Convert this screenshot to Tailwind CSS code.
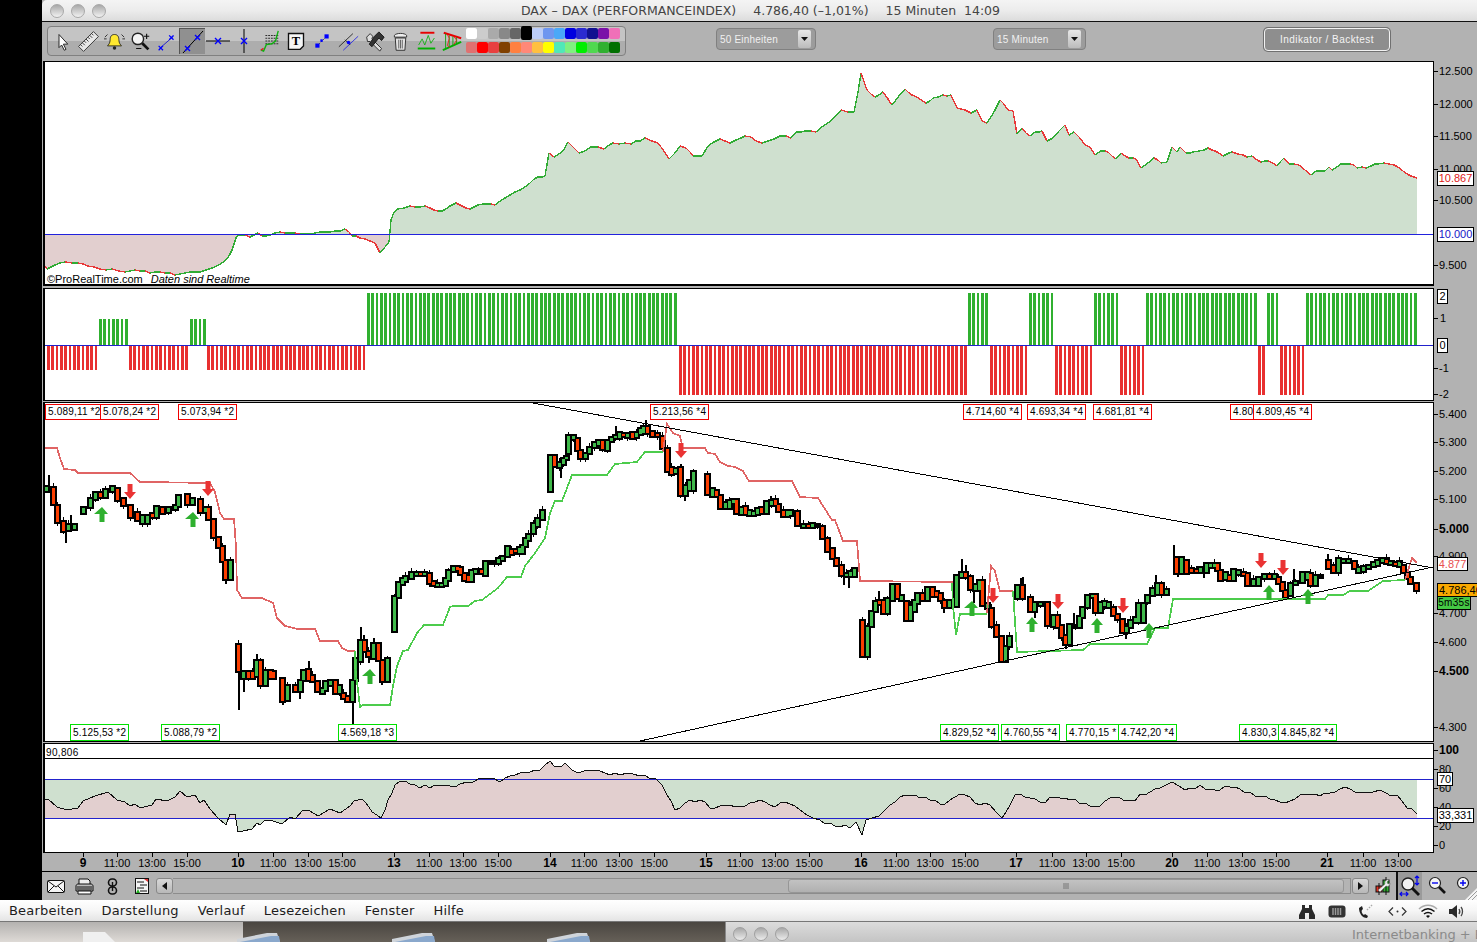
<!DOCTYPE html>
<html lang="de">
<head>
<meta charset="utf-8">
<title>DAX</title>
<script src="https://cdn.jsdelivr.net/npm/@tailwindcss/browser@4"></script>
</head>
<body class="bg-black">
<div class="w-[1477px] h-[942px] overflow-hidden flex flex-col bg-black font-['Liberation_Sans',sans-serif] text-black">

  <div class="flex h-[900px] shrink-0">
    <div class="w-[42px] shrink-0 bg-black"></div>
    <div class="flex-1 flex flex-col bg-[#b2b2b2] min-w-0">

      <!-- title bar -->
      <div class="relative h-[22px] shrink-0 rounded-tl-[5px] bg-gradient-to-b from-[#f4f4f4] via-[#ececec] to-[#dcdcdc] border-b border-[#111] flex items-center justify-center gap-[17px] pt-[2px] pl-[2px] font-['DejaVu_Sans',sans-serif] text-[12.5px] text-[#444]">
        <div class="absolute left-[8px] top-[4px] flex gap-[7px]">
          <span class="w-[14px] h-[14px] rounded-full border border-[#a8a8a8] bg-gradient-to-b from-[#a8a8a8] to-[#f2f2f2]"></span>
          <span class="w-[14px] h-[14px] rounded-full border border-[#a8a8a8] bg-gradient-to-b from-[#a8a8a8] to-[#f2f2f2]"></span>
          <span class="w-[14px] h-[14px] rounded-full border border-[#a8a8a8] bg-gradient-to-b from-[#a8a8a8] to-[#f2f2f2]"></span>
        </div>
        <span>DAX – DAX (PERFORMANCEINDEX)</span><span>4.786,40 (–1,01%)</span><span>15 Minuten&nbsp;&nbsp;14:09</span>
      </div>

      <!-- toolbar -->
      <div class="relative h-[39px] shrink-0 flex items-start">
        <div class="ml-[5px] mt-[4px] w-[579px] h-[30px] rounded-[4px] border border-[#808080] bg-gradient-to-b from-[#c4c4c4] from-50% to-[#adadad] to-50% flex items-center pl-px">
          <button class="w-[26px] h-[26px] flex items-center justify-center"><svg width="21" height="21" viewBox="0 0 24 24"><path d="M8 4v15l3-3 3 6 2-1-3-6h5z" fill="#fff" stroke="#222" stroke-width="1.1"/></svg></button>
          <button class="w-[26px] h-[26px] flex items-center justify-center"><svg width="21" height="21" viewBox="0 0 24 24"><g transform="rotate(-45 12 12)"><rect x="0" y="8" width="24" height="8" fill="#e8e8e8" stroke="#333"/><path d="M3 8v3M6 8v4M9 8v3M12 8v4M15 8v3M18 8v4M21 8v3" stroke="#333" fill="none"/></g></svg></button>
          <button class="w-[26px] h-[26px] flex items-center justify-center"><svg width="21" height="21" viewBox="0 0 24 24"><path d="M12 4c-4 0-5 3-5 6 0 4-2 6-3 7h16c-1-1-3-3-3-7 0-3-1-6-5-6z" fill="#ffe830" stroke="#222"/><circle cx="12" cy="19.5" r="2" fill="#222"/><path d="M4 4 1 7M20 4l3 3M3 9H0M21 9h3" stroke="#222" fill="none"/></svg></button>
          <button class="w-[26px] h-[26px] flex items-center justify-center"><svg width="21" height="21" viewBox="0 0 24 24"><circle cx="9" cy="9" r="6.5" fill="#f4f4f4" stroke="#222" stroke-width="1.6"/><path d="m14 14 7 7" stroke="#111" stroke-width="3.2" fill="none"/><path d="M19 3v6M16 6h6M7 20h6" stroke="#111" stroke-width="1.3" fill="none"/></svg></button>
          <button class="w-[26px] h-[26px] flex items-center justify-center"><svg width="21" height="21" viewBox="0 0 24 24"><path d="M4 20 20 6" stroke="#1515c8" fill="none"/><path d="M3 17l5 5M8 17l-5 5M15 5l5 5M20 5l-5 5" stroke="#0000ff" stroke-width="1.4" fill="none"/></svg></button>
          <button class="w-[26px] h-[26px] bg-[#909090] border-l border-t border-[#555] flex items-center justify-center"><svg width="24" height="24" viewBox="0 0 24 24"><path d="M2 23 22 1" stroke="#000" fill="none"/><path d="M4 16l5 5M9 16l-5 5M14 5l5 5M19 5l-5 5" stroke="#0000ff" stroke-width="1.4" fill="none"/></svg></button>
          <button class="w-[26px] h-[26px] flex items-center justify-center"><svg width="24" height="24" viewBox="0 0 24 24"><path d="M0 12h24" stroke="#000" fill="none"/><path d="M9 9l6 6M15 9l-6 6" stroke="#0000ff" stroke-width="1.4" fill="none"/></svg></button>
          <button class="w-[26px] h-[26px] flex items-center justify-center"><svg width="24" height="24" viewBox="0 0 24 24"><path d="M12 0v24" stroke="#000" fill="none"/><path d="M9 9l6 6M15 9l-6 6" stroke="#0000ff" stroke-width="1.4" fill="none"/></svg></button>
          <button class="w-[26px] h-[26px] flex items-center justify-center"><svg width="22" height="22" viewBox="0 0 24 24"><path d="M7 6h14M7 9h14M7 12h14M7 15h14" stroke="#222" stroke-dasharray="2 1" fill="none"/><path d="M2 22l3 1 3-7 6-1 4-3 3-11" stroke="#10b010" stroke-width="1.5" fill="none"/><path d="M2 22l3-2" stroke="#e02020" stroke-width="1.5" fill="none"/></svg></button>
          <button class="w-[26px] h-[26px] flex items-center justify-center"><svg width="20" height="20" viewBox="0 0 24 24"><path d="M3 3h18v15l-4 4H3z" fill="#f6f6f6" stroke="#111" stroke-width="1.6"/><text x="12" y="17" text-anchor="middle" font-family="Liberation Serif" font-weight="700" font-size="15" fill="#000">T</text></svg></button>
          <button class="w-[26px] h-[26px] flex items-center justify-center"><svg width="20" height="20" viewBox="0 0 24 24"><path d="M5 19 19 5" stroke="#111" stroke-dasharray="2 2" fill="none"/><rect x="4" y="15" width="5" height="5" fill="#0000ff"/><rect x="15" y="4" width="5" height="5" fill="#0000ff"/><rect x="10" y="10" width="3" height="3" fill="#0000ff"/></svg></button>
          <button class="w-[26px] h-[26px] flex items-center justify-center"><svg width="21" height="21" viewBox="0 0 24 24"><path d="M1 18 17 3" stroke="#222" fill="none"/><path d="M6 22 23 6" stroke="#2a2ae0" fill="none"/><path d="M8 10l6 6" stroke="#222" fill="none"/><circle cx="12" cy="13" r="2" fill="#0000ff"/></svg></button>
          <button class="w-[26px] h-[26px] flex items-center justify-center"><svg width="21" height="21" viewBox="0 0 24 24"><path d="M3 7l4-4 3 3-1 3 11 11-2 3L7 12l-3 0z" fill="#ddd" stroke="#222"/><path d="M12 6l5-5 6 6-3 4-3-3-8 10-3-3z" fill="#333" stroke="#111"/></svg></button>
          <button class="w-[26px] h-[26px] flex items-center justify-center"><svg width="21" height="21" viewBox="0 0 24 24"><path d="M5 5c2-3 12-3 14 0v2H5z" fill="#eee" stroke="#222"/><path d="M6 8h12l-1 14H7z" fill="#e2e2e2" stroke="#222"/><path d="M10 10v10M12 10v10M14 10v10" stroke="#555" fill="none"/></svg></button>
          <button class="w-[26px] h-[26px] flex items-center justify-center"><svg width="21" height="21" viewBox="0 0 24 24"><path d="M5 2h16" stroke="#e80000" stroke-width="2.2" fill="none"/><path d="M2 20h20" stroke="#00b000" stroke-width="2.2" fill="none"/><path d="M3 16l4-7 3 7 4-11 3 9 4-6" stroke="#10b010" fill="none"/></svg></button>
          <button class="w-[26px] h-[26px] flex items-center justify-center"><svg width="22" height="22" viewBox="0 0 24 24"><path d="M3 3 22 9" stroke="#e80000" stroke-width="2.2" fill="none"/><path d="M2 22 22 13" stroke="#00b000" stroke-width="2.2" fill="none"/><path d="M5 4v17M9 6v13M13 7v10M17 8v7" stroke="#10a010" fill="none"/><path d="M7 5l2 4-2 8 3 2M14 7l3 4-3 5" stroke="#e82020" fill="none"/></svg></button>
          <div class="ml-px grid grid-cols-[repeat(14,11px)] grid-rows-2 gap-y-[2px]">
            <i class="h-[11px] rounded-[2px] bg-[#ffffff]"></i><i class="h-[11px] rounded-[2px] bg-[#cccccc]"></i><i class="h-[11px] rounded-[2px] bg-[#aaaaaa]"></i><i class="h-[11px] rounded-[2px] bg-[#888888]"></i><i class="h-[11px] rounded-[2px] bg-[#666666]"></i><i class="h-[14px] -mt-[2px] rounded-[2px] bg-[#000000]"></i><i class="h-[11px] rounded-[2px] bg-[#bccdf8]"></i><i class="h-[11px] rounded-[2px] bg-[#6e96f0]"></i><i class="h-[11px] rounded-[2px] bg-[#4aa8f8]"></i><i class="h-[11px] rounded-[2px] bg-[#0000e0]"></i><i class="h-[11px] rounded-[2px] bg-[#2a2ad0]"></i><i class="h-[11px] rounded-[2px] bg-[#101090]"></i><i class="h-[11px] rounded-[2px] bg-[#7a10a8]"></i><i class="h-[11px] rounded-[2px] bg-[#f070b8]"></i>
            <i class="h-[11px] rounded-[2px] bg-[#e07070]"></i><i class="h-[11px] rounded-[2px] bg-[#ff0000]"></i><i class="h-[11px] rounded-[2px] bg-[#e84040]"></i><i class="h-[11px] rounded-[2px] bg-[#804000]"></i><i class="h-[11px] rounded-[2px] bg-[#ff8040]"></i><i class="h-[11px] rounded-[2px] bg-[#ff8878]"></i><i class="h-[11px] rounded-[2px] bg-[#ffc040]"></i><i class="h-[11px] rounded-[2px] bg-[#ffff00]"></i><i class="h-[11px] rounded-[2px] bg-[#50e8b8]"></i><i class="h-[11px] rounded-[2px] bg-[#80f080]"></i><i class="h-[11px] rounded-[2px] bg-[#00ee00]"></i><i class="h-[11px] rounded-[2px] bg-[#50d850]"></i><i class="h-[11px] rounded-[2px] bg-[#30b030]"></i><i class="h-[11px] rounded-[2px] bg-[#007000]"></i>
          </div>
        </div>
        <div class="ml-[90px] mt-[6px] w-[100px] h-[22px] rounded-[4px] border border-[#808080] bg-[#9c9c9c] flex items-center justify-between pl-[3px] pr-[4px] text-[10px] tracking-[0.2px] text-[#f0f0f0]">
          <span>50 Einheiten</span>
          <span class="w-[13px] h-[18px] rounded-[2px] bg-gradient-to-b from-[#e8e8e8] to-[#bcbcbc] flex items-center justify-center"><svg width="7" height="4" viewBox="0 0 7 4"><path d="M0 0h7L3.500 4z" fill="#111"/></svg></span>
        </div>
        <div class="ml-[177px] mt-[6px] w-[93px] h-[22px] rounded-[4px] border border-[#808080] bg-[#9c9c9c] flex items-center justify-between pl-[3px] pr-[4px] text-[10px] tracking-[0.2px] text-[#f0f0f0]">
          <span>15 Minuten</span>
          <span class="w-[13px] h-[18px] rounded-[2px] bg-gradient-to-b from-[#e8e8e8] to-[#bcbcbc] flex items-center justify-center"><svg width="7" height="4" viewBox="0 0 7 4"><path d="M0 0h7L3.500 4z" fill="#111"/></svg></span>
        </div>
        <div class="ml-[178px] mt-[6px] w-[126px] h-[23px] rounded-[4px] border border-[#f2f2f2] bg-[#8e8e8e] shadow-[0_0_0_1px_#707070] flex items-center justify-center text-[10px] tracking-[0.45px] text-[#f4f4f4]">Indikator / Backtest</div>
      </div>

      <!-- price-comparison panel -->
      <div class="flex h-[225px] shrink-0">
        <div class="relative ml-px w-[1391px] shrink-0 border-2 border-x-0 border-t-0 border-b-black">
          <div class="absolute inset-0 border-l-2 border-r border-t border-black bg-white">
            <svg id="p1" width="1388" height="223" viewBox="45 62 1388 223" class="block">
              <defs>
                <clipPath id="p1a"><rect x="45" y="62" width="1388" height="172"/></clipPath>
                <clipPath id="p1b"><rect x="45" y="234" width="1388" height="60"/></clipPath>
              </defs>
              <polygon id="p1fillg" fill="#cfe0cf" clip-path="url(#p1a)"/>
              <polygon id="p1fillr" fill="#e2cfcf" clip-path="url(#p1b)"/>
              <g id="p1line" fill="none" stroke-width="1.4" shape-rendering="crispEdges"></g>
              <path d="M45 234.500H1433" stroke="#2222dd" fill="none" shape-rendering="crispEdges"/>
            </svg>
            <div class="absolute left-[2px] top-[211px] text-[11px] leading-[13px] whitespace-nowrap">©ProRealTime.com<span class="italic ml-[8px]">Daten sind Realtime</span></div>
          </div>
        </div>
        <div class="relative flex-1 text-[11px] leading-[14px]">
          <div class="absolute left-0 top-[3px] flex h-[14px] items-center"><i class="w-[4px] h-px bg-black mr-[1px]"></i>12.500</div>
          <div class="absolute left-0 top-[36px] flex h-[14px] items-center"><i class="w-[4px] h-px bg-black mr-[1px]"></i>12.000</div>
          <div class="absolute left-0 top-[68px] flex h-[14px] items-center"><i class="w-[4px] h-px bg-black mr-[1px]"></i>11.500</div>
          <div class="absolute left-0 top-[101px] flex h-[14px] items-center"><i class="w-[4px] h-px bg-black mr-[1px]"></i>11.000</div>
          <div class="absolute left-0 top-[132px] flex h-[14px] items-center"><i class="w-[4px] h-px bg-black mr-[1px]"></i>10.500</div>
          <div class="absolute left-0 top-[197px] flex h-[14px] items-center"><i class="w-[4px] h-px bg-black mr-[1px]"></i>9.500</div>
          <div class="absolute left-[3px] top-[110px] w-[37px] h-[15px] border border-black bg-white text-[#e01818] text-center leading-[13px]">10.867</div>
          <div class="absolute left-[3px] top-[166px] w-[37px] h-[15px] border border-black bg-white text-[#1515c8] text-center leading-[13px]">10.000</div>
        </div>
      </div>

      <div class="h-[2px] shrink-0"></div>

      <!-- signal panel -->
      <div class="flex h-[113px] shrink-0">
        <div class="relative ml-px w-[1391px] shrink-0 border-l-2 border-r border-y border-black bg-white">
          <svg id="p2" width="1388" height="111" viewBox="45 289 1388 111" class="block" shape-rendering="crispEdges"></svg>
        </div>
        <div class="relative flex-1 text-[11px] leading-[14px]">
          <div class="absolute left-[3px] top-[1px] w-[11px] h-[15px] border border-black bg-white text-center leading-[13px]">2</div>
          <div class="absolute left-0 top-[23px] flex h-[14px] items-center"><i class="w-[4px] h-px bg-black mr-[2px]"></i>1</div>
          <div class="absolute left-[3px] top-[50px] w-[11px] h-[15px] border border-black bg-white text-center leading-[13px]">0</div>
          <div class="absolute left-0 top-[73px] flex h-[14px] items-center"><i class="w-[4px] h-px bg-black mr-[1px]"></i>-1</div>
          <div class="absolute left-0 top-[99px] flex h-[14px] items-center"><i class="w-[4px] h-px bg-black mr-[1px]"></i>-2</div>
        </div>
      </div>

      <div class="h-px shrink-0"></div>

      <!-- candlestick panel -->
      <div class="flex h-[340px] shrink-0">
        <div class="relative ml-px w-[1391px] shrink-0 border-l-2 border-r border-y border-black bg-white overflow-hidden">
          <svg id="p3" width="1388" height="338" viewBox="45 403 1388 338" class="block">
            <g id="p3candles" shape-rendering="crispEdges"></g>
            <g fill="none" stroke="#e06464" stroke-width="1.7" shape-rendering="crispEdges">
              <polyline points="45,448 57,448 60,458 64,469 75,470 78,473 130,473 140,482 147,482 210,483 215,492 220,513 224,519 234,519 236,547 237,590 242,598 262,598 273,603 277,618 285,626 298,629 315,629 320,641 338,641 342,648 348,651 355,651"/>
              <polyline points="663,452 667,424 673,433 680,436 683,448 705,448 708,453 715,454 720,462 728,466 735,467 743,471 749,481 792,481 800,497 818,498 832,520 835,520 843,541 857,541 860,581 953,582"/>
              <polyline points="987,613 991,566 995,571 1000,591 1013,591"/>
              <polyline points="1405,580 1412,558 1417,563"/>
            </g>
            <g fill="none" stroke="#4ccc4c" stroke-width="1.7" shape-rendering="crispEdges">
              <polyline points="355,651 355,666 358,690 360,707 363,705 390,705 393,686 397,666 403,651 408,650 417,633 424,625 443,625 450,607 453,606 468,606 475,601 482,600 498,588 507,577 521,577 525,566 535,553 545,538 550,513 555,501 562,501 572,475 607,475 615,464 637,462 645,452 663,452"/>
              <polyline points="952,583 953,606 956,635 960,614 987,614"/>
              <polyline points="1013,591 1017,652 1083,650 1090,644 1147,644 1155,628 1168,628 1173,599 1325,599 1328,595 1343,595 1350,591 1368,591 1383,581 1405,580"/>
            </g>
            <path d="M533 403 1433 568M640 741 1433 567" stroke="#000" fill="none" shape-rendering="crispEdges"/>
            <g fill="#2fb02f">
              <path d="M101 507l6 7h-3.500v8h-5v-8H93z" transform="translate(1 0)"/>
              <path d="M192 512l6 7h-3.500v8h-5v-8H184z" transform="translate(1 0)"/>
              <path d="M369 669l6 7h-3.500v8h-5v-8H361z" transform="translate(1 0)"/>
              <path d="M971 601l6 7h-3.500v8h-5v-8H963z" transform="translate(1 0)"/>
              <path d="M1032 617l6 7h-3.500v8h-5v-8h-3.500z"/>
              <path d="M1097 618l6 7h-3.500v8h-5v-8h-3.500z"/>
              <path d="M1149 623l6 7h-3.500v8h-5v-8h-3.500z"/>
              <path d="M1269 585l6 7h-3.500v8h-5v-8h-3.500z"/>
              <path d="M1308 589l6 7h-3.500v8h-5v-8h-3.500z"/>
            </g>
            <g fill="#ea3333">
              <path d="M130 499l-6-7h3.500v-8h5v8h3.500z"/>
              <path d="M208 496l-6-7h3.500v-8h5v8h3.500z"/>
              <path d="M681 458l-6-7h3.500v-8h5v8h3.500z"/>
              <path d="M993 603l-6-7h3.500v-8h5v8h3.500z"/>
              <path d="M1058 609l-6-7h3.500v-8h5v8h3.500z"/>
              <path d="M1123 613l-6-7h3.500v-8h5v8h3.500z"/>
              <path d="M1261 568l-6-7h3.500v-8h5v8h3.500z"/>
              <path d="M1283 575l-6-7h3.500v-8h5v8h3.500z"/>
            </g>
          </svg>
          <!-- high / low value flags -->
          <div class="absolute left-0 top-px w-[57px] h-[16px] border border-[#f00000] bg-white text-[10px] tracking-[0.18px] leading-[14px] pl-[2px] overflow-hidden whitespace-nowrap">5.089,11 *2</div>
          <div class="absolute left-[55px] top-px w-[59px] h-[16px] border border-[#f00000] bg-white text-[10px] tracking-[0.18px] leading-[14px] pl-[2px] overflow-hidden whitespace-nowrap">5.078,24 *2</div>
          <div class="absolute left-[133px] top-px w-[59px] h-[16px] border border-[#f00000] bg-white text-[10px] tracking-[0.18px] leading-[14px] pl-[2px] overflow-hidden whitespace-nowrap">5.073,94 *2</div>
          <div class="absolute left-[605px] top-px w-[59px] h-[16px] border border-[#f00000] bg-white text-[10px] tracking-[0.18px] leading-[14px] pl-[2px] overflow-hidden whitespace-nowrap">5.213,56 *4</div>
          <div class="absolute left-[918px] top-px w-[59px] h-[16px] border border-[#f00000] bg-white text-[10px] tracking-[0.18px] leading-[14px] pl-[2px] overflow-hidden whitespace-nowrap">4.714,60 *4</div>
          <div class="absolute left-[982px] top-px w-[59px] h-[16px] border border-[#f00000] bg-white text-[10px] tracking-[0.18px] leading-[14px] pl-[2px] overflow-hidden whitespace-nowrap">4.693,34 *4</div>
          <div class="absolute left-[1048px] top-px w-[59px] h-[16px] border border-[#f00000] bg-white text-[10px] tracking-[0.18px] leading-[14px] pl-[2px] overflow-hidden whitespace-nowrap">4.681,81 *4</div>
          <div class="absolute left-[1185px] top-px w-[28px] h-[16px] border border-[#f00000] bg-white text-[10px] tracking-[0.18px] leading-[14px] pl-[2px] overflow-hidden whitespace-nowrap">4.80</div>
          <div class="absolute left-[1208px] top-px w-[59px] h-[16px] border border-[#f00000] bg-white text-[10px] tracking-[0.18px] leading-[14px] pl-[2px] overflow-hidden whitespace-nowrap">4.809,45 *4</div>
          <div class="absolute left-[25px] bottom-0 w-[59px] h-[17px] border border-[#00e000] bg-white text-[10px] tracking-[0.18px] leading-[15px] pl-[2px] overflow-hidden whitespace-nowrap">5.125,53 *2</div>
          <div class="absolute left-[116px] bottom-0 w-[59px] h-[17px] border border-[#00e000] bg-white text-[10px] tracking-[0.18px] leading-[15px] pl-[2px] overflow-hidden whitespace-nowrap">5.088,79 *2</div>
          <div class="absolute left-[293px] bottom-0 w-[59px] h-[17px] border border-[#00e000] bg-white text-[10px] tracking-[0.18px] leading-[15px] pl-[2px] overflow-hidden whitespace-nowrap">4.569,18 *3</div>
          <div class="absolute left-[895px] bottom-0 w-[59px] h-[17px] border border-[#00e000] bg-white text-[10px] tracking-[0.18px] leading-[15px] pl-[2px] overflow-hidden whitespace-nowrap">4.829,52 *4</div>
          <div class="absolute left-[956px] bottom-0 w-[59px] h-[17px] border border-[#00e000] bg-white text-[10px] tracking-[0.18px] leading-[15px] pl-[2px] overflow-hidden whitespace-nowrap">4.760,55 *4</div>
          <div class="absolute left-[1021px] bottom-0 w-[54px] h-[17px] border border-[#00e000] bg-white text-[10px] tracking-[0.18px] leading-[15px] pl-[2px] overflow-hidden whitespace-nowrap">4.770,15 *</div>
          <div class="absolute left-[1073px] bottom-0 w-[59px] h-[17px] border border-[#00e000] bg-white text-[10px] tracking-[0.18px] leading-[15px] pl-[2px] overflow-hidden whitespace-nowrap">4.742,20 *4</div>
          <div class="absolute left-[1194px] bottom-0 w-[41px] h-[17px] border border-[#00e000] bg-white text-[10px] tracking-[0.18px] leading-[15px] pl-[2px] overflow-hidden whitespace-nowrap">4.830,3</div>
          <div class="absolute left-[1233px] bottom-0 w-[59px] h-[17px] border border-[#00e000] bg-white text-[10px] tracking-[0.18px] leading-[15px] pl-[2px] overflow-hidden whitespace-nowrap">4.845,82 *4</div>
        </div>
        <div class="relative flex-1 text-[11px] leading-[14px]">
          <div class="absolute left-0 top-[5px] flex h-[14px] items-center"><i class="w-[4px] h-px bg-black mr-[1px]"></i>5.400</div>
          <div class="absolute left-0 top-[33px] flex h-[14px] items-center"><i class="w-[4px] h-px bg-black mr-[1px]"></i>5.300</div>
          <div class="absolute left-0 top-[62px] flex h-[14px] items-center"><i class="w-[4px] h-px bg-black mr-[1px]"></i>5.200</div>
          <div class="absolute left-0 top-[90px] flex h-[14px] items-center"><i class="w-[4px] h-px bg-black mr-[1px]"></i>5.100</div>
          <div class="absolute left-0 top-[120px] flex h-[14px] items-center font-bold text-[12px]"><i class="w-[4px] h-px bg-black mr-[1px]"></i>5.000</div>
          <div class="absolute left-0 top-[147px] flex h-[14px] items-center"><i class="w-[4px] h-px bg-black mr-[1px]"></i>4.900</div>
          <div class="absolute left-0 top-[204px] flex h-[14px] items-center"><i class="w-[4px] h-px bg-black mr-[1px]"></i>4.700</div>
          <div class="absolute left-0 top-[233px] flex h-[14px] items-center"><i class="w-[4px] h-px bg-black mr-[1px]"></i>4.600</div>
          <div class="absolute left-0 top-[262px] flex h-[14px] items-center font-bold text-[12px]"><i class="w-[4px] h-px bg-black mr-[1px]"></i>4.500</div>
          <div class="absolute left-0 top-[318px] flex h-[14px] items-center"><i class="w-[4px] h-px bg-black mr-[1px]"></i>4.300</div>
          <div class="absolute left-[3px] top-[155px] w-[31px] h-[14px] border border-black bg-white text-[#e85050] text-center leading-[12px]">4.877</div>
          <div class="absolute left-[3px] top-[181px] w-[41px] h-[14px] border border-black bg-[#f8a800] pl-px leading-[12px] whitespace-nowrap overflow-hidden">4.786,40</div>
          <div class="absolute left-[3px] top-[194px] w-[34px] h-[14px] border border-black bg-[#44c844] text-center text-[10px] tracking-[0.3px] leading-[12px]">5m35s</div>
        </div>
      </div>

      <div class="h-px shrink-0"></div>

      <!-- oscillator panel -->
      <div class="flex h-[110px] shrink-0">
        <div class="relative ml-px w-[1391px] shrink-0 border-l-2 border-r border-y border-black bg-white flex flex-col">
          <div class="h-[15px] shrink-0 border-b border-black text-[10px] tracking-[0.35px] leading-[17px] pl-[1px]">90,806</div>
          <svg id="p4" width="1388" height="93" viewBox="45 759 1388 93" class="block">
            <defs>
              <clipPath id="p4a"><rect x="45" y="759" width="1388" height="59"/></clipPath>
              <clipPath id="p4b"><rect x="45" y="779" width="1388" height="73"/></clipPath>
            </defs>
            <polygon id="p4fr" fill="#e2cfcf" clip-path="url(#p4a)"/>
            <polygon id="p4fg" fill="#cfe0cf" clip-path="url(#p4b)"/>
            <path d="M45 779.500H1433M45 818.500H1433" stroke="#2222cc" fill="none" shape-rendering="crispEdges"/>
            <polyline id="p4line" fill="none" stroke="#111" stroke-width="1" shape-rendering="crispEdges"/>
          </svg>
        </div>
        <div class="relative flex-1 text-[11px] leading-[14px]">
          <div class="absolute left-0 top-0 flex h-[14px] items-center font-bold text-[12px]"><i class="w-[4px] h-px bg-black mr-[1px]"></i>100</div>
          <div class="absolute left-0 top-[19px] flex h-[14px] items-center"><i class="w-[4px] h-px bg-black mr-[1px]"></i>80</div>
          <div class="absolute left-0 top-[38px] flex h-[14px] items-center"><i class="w-[4px] h-px bg-black mr-[1px]"></i>60</div>
          <div class="absolute left-0 top-[57px] flex h-[14px] items-center"><i class="w-[4px] h-px bg-black mr-[1px]"></i>40</div>
          <div class="absolute left-0 top-[76px] flex h-[14px] items-center"><i class="w-[4px] h-px bg-black mr-[1px]"></i>20</div>
          <div class="absolute left-0 top-[95px] flex h-[14px] items-center"><i class="w-[4px] h-px bg-black mr-[1px]"></i>0</div>
          <div class="absolute left-[3px] top-[29px] w-[16px] h-[14px] border border-black bg-white text-center leading-[12px]">70</div>
          <div class="absolute left-[3px] top-[65px] w-[37px] h-[15px] border border-black bg-white text-center leading-[13px]">33,331</div>
        </div>
      </div>

      <!-- time axis -->
      <div class="relative h-[18px] shrink-0 text-[11px] leading-[14px]">
        <b class="absolute top-[3px] left-[41px] -translate-x-1/2 text-[12px]">9</b>
        <b class="absolute top-[3px] left-[196px] -translate-x-1/2 text-[12px]">10</b>
        <b class="absolute top-[3px] left-[352px] -translate-x-1/2 text-[12px]">13</b>
        <b class="absolute top-[3px] left-[508px] -translate-x-1/2 text-[12px]">14</b>
        <b class="absolute top-[3px] left-[664px] -translate-x-1/2 text-[12px]">15</b>
        <b class="absolute top-[3px] left-[819px] -translate-x-1/2 text-[12px]">16</b>
        <b class="absolute top-[3px] left-[974px] -translate-x-1/2 text-[12px]">17</b>
        <b class="absolute top-[3px] left-[1130px] -translate-x-1/2 text-[12px]">20</b>
        <b class="absolute top-[3px] left-[1285px] -translate-x-1/2 text-[12px]">21</b>
        <span class="absolute top-[3px] left-[75px] -translate-x-1/2">11:00</span><span class="absolute top-[3px] left-[110px] -translate-x-1/2">13:00</span><span class="absolute top-[3px] left-[145px] -translate-x-1/2">15:00</span>
        <span class="absolute top-[3px] left-[231px] -translate-x-1/2">11:00</span><span class="absolute top-[3px] left-[266px] -translate-x-1/2">13:00</span><span class="absolute top-[3px] left-[300px] -translate-x-1/2">15:00</span>
        <span class="absolute top-[3px] left-[387px] -translate-x-1/2">11:00</span><span class="absolute top-[3px] left-[421px] -translate-x-1/2">13:00</span><span class="absolute top-[3px] left-[456px] -translate-x-1/2">15:00</span>
        <span class="absolute top-[3px] left-[542px] -translate-x-1/2">11:00</span><span class="absolute top-[3px] left-[577px] -translate-x-1/2">13:00</span><span class="absolute top-[3px] left-[612px] -translate-x-1/2">15:00</span>
        <span class="absolute top-[3px] left-[698px] -translate-x-1/2">11:00</span><span class="absolute top-[3px] left-[733px] -translate-x-1/2">13:00</span><span class="absolute top-[3px] left-[767px] -translate-x-1/2">15:00</span>
        <span class="absolute top-[3px] left-[854px] -translate-x-1/2">11:00</span><span class="absolute top-[3px] left-[888px] -translate-x-1/2">13:00</span><span class="absolute top-[3px] left-[923px] -translate-x-1/2">15:00</span>
        <span class="absolute top-[3px] left-[1010px] -translate-x-1/2">11:00</span><span class="absolute top-[3px] left-[1044px] -translate-x-1/2">13:00</span><span class="absolute top-[3px] left-[1079px] -translate-x-1/2">15:00</span>
        <span class="absolute top-[3px] left-[1165px] -translate-x-1/2">11:00</span><span class="absolute top-[3px] left-[1200px] -translate-x-1/2">13:00</span><span class="absolute top-[3px] left-[1234px] -translate-x-1/2">15:00</span>
        <span class="absolute top-[3px] left-[1321px] -translate-x-1/2">11:00</span><span class="absolute top-[3px] left-[1356px] -translate-x-1/2">13:00</span>
        <svg class="absolute left-0 top-0" width="1392" height="4"><path d="M41 0v4M75 0v4M110 0v4M145 0v4M196 0v4M231 0v4M266 0v4M300 0v4M352 0v4M387 0v4M421 0v4M456 0v4M508 0v4M542 0v4M577 0v4M612 0v4M664 0v4M698 0v4M733 0v4M767 0v4M819 0v4M854 0v4M888 0v4M923 0v4M974 0v4M1010 0v4M1044 0v4M1079 0v4M1130 0v4M1165 0v4M1200 0v4M1234 0v4M1285 0v4M1321 0v4M1356 0v4" stroke="#000" fill="none" shape-rendering="crispEdges"/></svg>
      </div>

      <!-- bottom bar -->
      <div class="relative flex-1 border-t border-black flex items-center">
        <svg class="ml-[5px] shrink-0" width="18" height="13" viewBox="0 0 18 13"><rect x=".5" y=".5" width="17" height="12" rx="1" fill="#f4f4f4" stroke="#111"/><path d="M1 1l8 6 8-6M1 12l6-6M17 12l-6-6" stroke="#111" fill="none"/></svg>
        <svg class="ml-[10px] shrink-0" width="19" height="17" viewBox="0 0 19 17"><path d="M4 7V1h9l2 2v4" fill="#eee" stroke="#111"/><path d="M1 8c0-1 1-2 2-2h13c1 0 2 1 2 2v5H1z" fill="#bbb" stroke="#111"/><path d="M3 13h13v3H3z" fill="#fff" stroke="#111"/><path d="M2 9h15M2 11h15" stroke="#111" fill="none"/></svg>
        <svg class="ml-[13px] shrink-0" width="11" height="17" viewBox="0 0 11 17"><rect x="1.500" y="1" width="8" height="7" rx="3.500" fill="none" stroke="#111" stroke-width="1.600"/><rect x="1.500" y="9" width="8" height="7" rx="3.500" fill="none" stroke="#111" stroke-width="1.600"/><path d="M5.500 4v9" stroke="#111" stroke-width="1.400" fill="none"/></svg>
        <svg class="ml-[17px] shrink-0" width="14" height="16" viewBox="0 0 14 16"><rect x=".5" y=".5" width="13" height="15" fill="#f4f4f4" stroke="#111"/><path d="M2 4h7M5 7h7M2 10h7M5 13h7" stroke="#111" fill="none"/><path d="M9 1h4v3z" fill="#e03030"/><path d="M1 15l2-4 2 4z" fill="#20b020"/></svg>
        <span class="ml-[7px] w-[17px] h-[16px] shrink-0 rounded-[3px] border border-[#888] bg-gradient-to-b from-[#d8d8d8] to-[#b8b8b8] flex items-center justify-center"><svg width="5" height="8" viewBox="0 0 5 8"><path d="M5 0v8L0 4z" fill="#111"/></svg></span>
        <div class="relative w-[1178px] h-[16px] shrink-0 border-y border-r border-[#8c8c8c] bg-[#b4b4b4]">
          <div class="absolute left-[615px] right-[6px] top-0 bottom-0 rounded-[3px] border border-[#969696] bg-gradient-to-b from-[#c2c2c2] to-[#b0b0b0] flex items-center justify-center pr-[1px]">
            <svg width="6" height="6" viewBox="0 0 6 6"><path d="M0 1h6M0 3h6M0 5h6" stroke="#777" fill="none"/></svg>
          </div>
        </div>
        <span class="ml-[1px] w-[17px] h-[16px] shrink-0 rounded-[3px] border border-[#888] bg-gradient-to-b from-[#d8d8d8] to-[#b8b8b8] flex items-center justify-center"><svg width="5" height="8" viewBox="0 0 5 8"><path d="M0 0v8l5-4z" fill="#111"/></svg></span>
        <svg class="ml-[6px] shrink-0" width="16" height="18" viewBox="0 0 16 18"><rect x="8" y="3" width="6" height="12" fill="#30b030" stroke="#111"/><rect x="1" y="9" width="6" height="6" fill="#e03020" stroke="#111"/><path d="M11 0v18M4 6v12" stroke="#111" fill="none"/><path d="M3 13l7-6c-1-3 2-5 4-4l-2 2 1 2 2-1c0 3-2 4-4 3l-6 6z" fill="#eee" stroke="#555" stroke-width=".5"/></svg>
        <span class="ml-[5px] w-[26px] h-[28px] shrink-0 border-l-2 border-[#111] bg-[#9a9a9a] flex items-center justify-center"><svg width="22" height="22" viewBox="0 0 22 22"><circle cx="9" cy="9" r="6" fill="#f2f2f2" stroke="#222" stroke-width="1.4"/><path d="m13 13 7 7" stroke="#111" stroke-width="2.800" fill="none"/><path d="M18 1v9M16 3l2-2 2 2M16 8l2 2 2-2M1 19h8M3 17l-2 2 2 2M7 17l2 2-2 2" stroke="#0000ee" stroke-width="1.200" fill="none"/></svg></span>
        <svg class="ml-[6px] shrink-0" width="18" height="20" viewBox="0 0 18 20"><circle cx="7" cy="7" r="5.500" fill="#f4f4f4" stroke="#222" stroke-width="1.200"/><path d="M4 7h6" stroke="#0000ee" stroke-width="1.400" fill="none"/><path d="m11 11 6 6" stroke="#111" stroke-width="2.600" fill="none"/></svg>
        <svg class="ml-[10px] shrink-0" width="14" height="20" viewBox="0 0 14 20"><circle cx="7" cy="7" r="5.500" fill="#f4f4f4" stroke="#222" stroke-width="1.200"/><path d="M4 7h6M7 4v6" stroke="#0000ee" stroke-width="1.400" fill="none"/></svg>
        <svg class="absolute right-0 bottom-0" width="12" height="12" viewBox="0 0 12 12"><path d="M0 12 12 0v12z" fill="#f4f4f4"/><path d="M3 12l9-9M7 12l5-5" stroke="#999" fill="none"/></svg>
      </div>
    </div>
  </div>

  <!-- menu bar -->
  <div class="relative h-[22px] shrink-0 bg-gradient-to-b from-[#ffffff] via-[#f6f6f6] to-[#e4e4e4] border-b border-[#777] flex items-center pl-[9px] gap-[19px] font-['DejaVu_Sans',sans-serif] text-[13px] tracking-[0.2px] text-[#1c1c1c]">
    <span>Bearbeiten</span><span>Darstellung</span><span>Verlauf</span><span>Lesezeichen</span><span>Fenster</span><span>Hilfe</span>
    <div class="absolute left-[1299px] top-[3px] flex items-center h-[16px]">
      <svg width="16" height="15" viewBox="0 0 16 15"><path d="M3 1h3v3h4V1h3v4l3 6v4H10V9H6v6H0v-4l3-6z" fill="#2a2a2a"/></svg>
      <svg class="ml-[13px]" width="18" height="13" viewBox="0 0 18 13"><rect x=".5" y=".5" width="17" height="12" rx="3" fill="#333"/><path d="M5 3v7M7.500 3v7M10 3v7M12.500 3v7" stroke="#999" stroke-width="1.500" fill="none"/></svg>
      <svg class="ml-[12px]" width="16" height="15" viewBox="0 0 16 15"><path d="M1 4c0 5 3 10 8 10l1-2-3-2-1 1C4 10 3 7 4 6l1-1-1-3z" fill="#222"/><path d="M9 6l1-1M11 4l1-1M13 2l1-1" stroke="#aaa" stroke-width="1.500" fill="none"/></svg>
      <svg class="ml-[14px]" width="19" height="9" viewBox="0 0 19 9"><path d="M5 .5 1 4.500l4 4M14 .5l4 4-4 4" stroke="#333" stroke-width="1.200" fill="none"/><circle cx="9.500" cy="4.500" r="1" fill="#333"/></svg>
      <svg class="ml-[11px]" width="20" height="15" viewBox="0 0 20 15"><path d="M1 5c5-5 13-5 18 0" stroke="#aaa" stroke-width="1.500" fill="none"/><path d="M3.500 7.500c4-3.500 9-3.500 13 0M6 10c2.500-2 5.500-2 8 0" stroke="#111" stroke-width="1.500" fill="none"/><path d="M10 14l-2-2c1-1 3-1 4 0z" fill="#111"/></svg>
      <svg class="ml-[10px]" width="16" height="15" viewBox="0 0 16 15"><path d="M1 5h3l5-4v13l-5-4H1z" fill="#2a2a2a"/><path d="M11 5c1 1.500 1 3.500 0 5M13 3c2 2.500 2 6.500 0 9" stroke="#444" stroke-width="1.300" fill="none"/></svg>
    </div>
  </div>

  <!-- desktop behind the window -->
  <div class="relative flex flex-1 overflow-hidden">
    <div class="w-[243px] shrink-0 bg-gradient-to-b from-[#b4b2b0] to-[#dedad6]"></div>
    <div class="w-[482px] shrink-0 bg-gradient-to-b from-[#4a4641] to-[#666058]"></div>
    <div class="relative flex-1 bg-gradient-to-b from-[#dcdcdc] to-[#c4c4c4] border-l border-[#888]">
      <div class="absolute left-[7px] top-[5px] flex gap-[7px]">
        <span class="w-[14px] h-[14px] rounded-full border border-[#a0a0a0] bg-gradient-to-b from-[#a8a8a8] to-[#ececec]"></span>
        <span class="w-[14px] h-[14px] rounded-full border border-[#a0a0a0] bg-gradient-to-b from-[#a8a8a8] to-[#ececec]"></span>
        <span class="w-[14px] h-[14px] rounded-full border border-[#a0a0a0] bg-gradient-to-b from-[#a8a8a8] to-[#ececec]"></span>
      </div>
      <span class="absolute left-[626px] top-[3px] whitespace-nowrap font-['DejaVu_Sans',sans-serif] text-[13px] text-[#8a8a8a]">Internetbanking + B</span>
    </div>
    <svg class="absolute left-[83px] top-[10px]" width="33" height="10" viewBox="0 0 33 10"><path d="M0 0h22l10 10H0z" fill="#f0f0f0"/></svg>
    <svg class="absolute left-[237px] top-[11px]" width="44" height="9" viewBox="0 0 44 9"><path d="M0 9V6L30 0h10l3 9z" fill="#cfd4da"/><path d="M3 9 34 3h8l1 6z" fill="#8aa8cc"/></svg>
    <svg class="absolute left-[392px] top-[11px]" width="44" height="9" viewBox="0 0 44 9"><path d="M0 9V6L30 0h10l3 9z" fill="#cfd4da"/><path d="M3 9 34 3h8l1 6z" fill="#8aa8cc"/></svg>
    <svg class="absolute left-[547px] top-[11px]" width="44" height="9" viewBox="0 0 44 9"><path d="M0 9V6L30 0h10l3 9z" fill="#cfd4da"/><path d="M3 9 34 3h8l1 6z" fill="#8aa8cc"/></svg>
  </div>
</div>

<script>
(function(){
  var NS='http://www.w3.org/2000/svg';
  function add(p,tag,a){var e=document.createElementNS(NS,tag);for(var k in a)e.setAttribute(k,a[k]);p.appendChild(e);return e;}
  var seed=17;function rnd(){seed=(seed*137+59)%1000;return seed/1000;}
  function jag(A,amp,from){var o=[];for(var i=0;i<A.length-1;i++){o.push(A[i]);var d=A[i+1][0]-A[i][0];if(A[i][0]>=from&&d>=7){var n=d>=14?2:1;for(var j=1;j<=n;j++){var t=j/(n+1);o.push([Math.round(A[i][0]+d*t),Math.round(A[i][1]+(A[i+1][1]-A[i][1])*t+(rnd()-.5)*2*amp)]);}}}o.push(A[A.length-1]);return o;}

  /* equity curve */
  var L=[[45,266],[47,269],[55,265],[65,262],[78,263],[88,266],[100,269],[112,269],[125,272],[135,270],[150,273],[165,273],[175,275],[185,273],[200,272],[212,268],[225,261],[232,250],[236,238],[238,235],[245,235],[250,237],[258,233],[262,236],[270,235],[280,232],[295,233],[305,234],[320,232],[335,231],[345,229],[352,236],[360,238],[370,241],[375,243],[380,253],[385,247],[389,242],[391,220],[394,212],[398,209],[410,206],[425,206],[434,210],[442,211],[450,206],[456,203],[462,206],[470,209],[478,205],[487,204],[495,205],[500,201],[510,195],[520,190],[530,183],[538,177],[545,176],[549,153],[554,157],[563,151],[568,142],[579,153],[591,147],[604,149],[613,143],[625,143],[631,144],[645,138],[658,143],[669,159],[680,146],[686,148],[693,156],[702,156],[708,146],[720,139],[730,143],[736,140],[745,136],[762,143],[780,136],[791,138],[796,132],[805,131],[816,132],[828,123],[841,110],[854,112],[861,73],[867,90],[875,97],[883,92],[892,105],[905,89],[912,95],[926,103],[933,98],[943,95],[951,95],[957,108],[965,110],[971,113],[977,110],[982,121],[987,123],[1000,100],[1008,110],[1013,111],[1017,134],[1022,128],[1030,136],[1035,132],[1042,131],[1047,141],[1053,138],[1065,125],[1069,135],[1074,132],[1085,145],[1090,147],[1095,155],[1101,151],[1108,152],[1116,159],[1121,153],[1129,158],[1136,159],[1141,168],[1154,158],[1161,163],[1167,162],[1172,147],[1177,152],[1180,147],[1186,153],[1193,152],[1199,151],[1208,148],[1215,151],[1223,156],[1229,153],[1232,152],[1243,155],[1247,157],[1252,156],[1261,162],[1268,161],[1277,166],[1284,158],[1289,164],[1299,165],[1311,175],[1316,171],[1325,171],[1329,167],[1332,170],[1341,164],[1350,164],[1357,168],[1371,166],[1378,164],[1389,164],[1398,167],[1407,174],[1414,177],[1417,178]];
  L=jag(L,1,45);
  var pts=L.map(function(p){return p.join(',');}).join(' ')+' 1417,234 45,234';
  document.getElementById('p1fillg').setAttribute('points',pts);
  document.getElementById('p1fillr').setAttribute('points',pts);
  var g=document.getElementById('p1line');
  for(var i=1;i<L.length;i++){
    add(g,'line',{x1:L[i-1][0],y1:L[i-1][1],x2:L[i][0],y2:L[i][1],stroke:L[i][1]>L[i-1][1]?'#e83838':'#30ac34'});
  }

  /* signal bars */
  var R=[[47,98,1,'r'],[99,128,1,'g'],[129,189,1,'r'],[190,206,1,'g'],[207,366,1,'r'],[367,678,2,'g'],[679,967,2,'r'],[968,989,2,'g'],[990,1028,2,'r'],[1029,1054,2,'g'],[1055,1092,2,'r'],[1094,1118,2,'g'],[1120,1144,2,'r'],[1146,1257,2,'g'],[1258,1265,2,'r'],[1267,1278,2,'g'],[1280,1304,2,'r'],[1306,1417,2,'g']];
  var s2=document.getElementById('p2');
  R.forEach(function(r){
    var x=r[0];
    while(x+2.6<=r[1]+1){
      if(r[3]=='g')add(s2,'rect',{x:x,y:(r[2]==2?293:319),width:2.8,height:r[2]==2?52:26,fill:'#30b030'});
      else add(s2,'rect',{x:x,y:345,width:2.8,height:r[2]==2?50:25,fill:'#e83030'});
      x+=4.32;
    }
  });
  add(s2,'line',{x1:45,y1:345.5,x2:1433,y2:345.5,stroke:'#2222cc'});

  /* candles: x, top, bottom, colour */
  var C=[[46,486,491,'g'],[53,487,504,'r'],[57,505,522,'r'],[63,521,531,'r'],[68,524,530,'g'],[74,524,529,'g'],
  [83,507,513,'g'],[90,498,507,'g'],[95,492,499,'g'],[100,492,497,'r'],[105,489,497,'g'],[112,486,491,'g'],[117,488,500,'r'],[123,498,505,'r'],[130,505,517,'r'],[137,512,520,'r'],[142,515,523,'g'],[147,515,523,'g'],[152,513,517,'r'],[156,506,517,'g'],[162,507,513,'r'],[168,507,512,'g'],[175,505,509,'g'],[178,495,506,'g'],[187,494,504,'r'],[192,498,504,'g'],[200,499,512,'r'],[205,507,512,'g'],[208,507,519,'r'],[213,519,537,'r'],[218,537,547,'r'],[222,546,561,'r'],[225,560,579,'r'],[230,560,579,'g'],
  [238,644,671,'r'],[243,671,678,'g'],[248,671,678,'r'],[252,671,678,'r'],[256,660,676,'g'],[260,660,685,'r'],[265,670,685,'g'],[270,670,678,'r'],[273,671,678,'r'],[282,678,701,'r'],[287,685,700,'g'],[295,685,691,'r'],[300,680,691,'g'],[303,670,680,'g'],[308,669,680,'r'],[312,675,681,'r'],[317,681,691,'r'],[322,688,693,'g'],[325,681,690,'g'],[330,680,685,'g'],[335,680,693,'r'],[339,685,693,'g'],[343,693,698,'r'],[347,696,701,'r'],[352,680,701,'g'],[355,658,680,'g'],[360,640,661,'g'],[364,640,651,'r'],[368,651,656,'r'],[373,643,658,'g'],[378,643,660,'r'],[382,660,681,'r'],[387,658,681,'g'],
  [394,596,631,'g'],[398,582,597,'g'],[402,578,584,'g'],[405,576,581,'g'],[411,572,578,'g'],[416,572,575,'g'],[420,572,575,'r'],[424,572,575,'g'],[429,573,583,'r'],[433,581,585,'r'],[437,583,586,'g'],[441,583,586,'g'],[445,578,585,'g'],[448,570,580,'g'],[453,566,571,'g'],[457,566,570,'r'],[460,567,574,'r'],[464,573,580,'r'],[468,575,581,'r'],[471,570,581,'g'],[475,569,573,'g'],[478,571,573,'r'],[481,569,573,'r'],[485,561,575,'g'],[490,561,563,'g'],[494,561,563,'g'],[498,558,563,'g'],[502,556,560,'g'],[507,546,556,'g'],[511,549,554,'r'],[515,549,552,'r'],[519,547,553,'g'],[522,545,553,'g'],[525,538,546,'g'],[528,534,540,'g'],[533,523,533,'g'],[537,518,526,'g'],[542,510,519,'g'],
  [550,455,491,'g'],[554,455,466,'r'],[559,462,467,'g'],[563,458,464,'g'],[566,456,459,'g'],[568,435,453,'g'],[573,435,439,'g'],[577,438,450,'r'],[580,450,458,'r'],[585,453,458,'g'],[589,447,453,'g'],[594,442,447,'g'],[598,440,445,'g'],[602,440,449,'r'],[607,440,450,'g'],[611,437,441,'g'],[615,435,438,'g'],[619,432,438,'g'],[623,433,436,'r'],[627,433,437,'g'],[632,432,438,'r'],[636,432,437,'g'],[640,428,434,'g'],[643,426,433,'g'],[647,426,433,'r'],[652,431,436,'r'],[657,433,436,'r'],
  [662,436,448,'r'],[667,448,471,'r'],[671,467,474,'r'],[675,468,473,'g'],[680,467,495,'r'],[685,485,495,'g'],[689,480,490,'g'],[693,471,490,'g'],
  [707,474,494,'r'],[712,488,496,'g'],[716,490,496,'r'],[720,495,508,'r'],[725,502,508,'g'],[729,500,508,'g'],[733,499,503,'g'],[736,499,513,'r'],[741,507,514,'g'],[745,506,514,'r'],[749,510,515,'g'],[753,511,515,'g'],[757,508,514,'g'],[761,507,513,'r'],[766,501,513,'g'],[771,500,505,'g'],[775,499,505,'r'],[778,504,511,'r'],[783,510,516,'r'],[787,510,516,'g'],[790,510,515,'g'],[797,511,525,'r'],[803,524,527,'g'],[808,524,527,'r'],[812,523,527,'g'],[817,524,526,'r'],[822,526,538,'r'],[827,538,551,'r'],[832,548,558,'r'],[836,558,565,'r'],[841,565,575,'r'],[846,573,576,'g'],[850,571,576,'g'],[854,568,576,'g'],
  [862,620,656,'r'],[867,626,656,'g'],[871,611,626,'g'],[875,601,611,'g'],[879,600,604,'r'],[883,600,613,'r'],[887,598,613,'g'],[892,584,600,'g'],[897,584,598,'r'],[901,595,600,'g'],[906,601,620,'r'],[910,605,620,'g'],[914,600,611,'g'],[917,593,603,'g'],[922,593,600,'r'],[927,587,600,'g'],[932,587,596,'r'],[936,591,596,'r'],[940,593,600,'r'],[944,600,607,'r'],[949,600,607,'g'],[956,575,606,'g'],[961,572,577,'g'],[965,572,577,'r'],[970,576,589,'r'],[975,584,590,'g'],[979,580,590,'g'],[982,580,605,'r'],[987,603,608,'g'],[991,608,626,'r'],[996,625,636,'r'],[1001,636,661,'r'],[1005,646,661,'g'],[1009,636,646,'g'],
  [1017,585,598,'g'],[1022,585,598,'r'],[1030,597,611,'r'],[1034,602,611,'g'],[1040,602,605,'g'],[1047,602,625,'r'],[1053,615,626,'g'],[1057,615,627,'r'],[1061,625,637,'r'],[1065,635,644,'r'],[1069,624,644,'g'],[1075,625,627,'r'],[1079,616,627,'g'],[1082,607,617,'g'],[1087,595,607,'g'],[1092,594,597,'g'],[1095,594,612,'r'],[1100,602,612,'g'],[1104,601,606,'g'],[1108,602,607,'g'],[1113,607,615,'r'],[1117,614,619,'r'],[1122,619,632,'r'],[1126,626,632,'g'],[1130,620,627,'g'],[1135,617,622,'g'],[1138,603,622,'g'],[1143,603,622,'g'],[1147,595,602,'g'],[1152,588,595,'g'],[1157,583,594,'g'],[1161,583,594,'r'],[1166,589,594,'g'],
  [1176,557,573,'r'],[1181,557,573,'g'],[1186,560,573,'r'],[1191,568,572,'r'],[1196,569,572,'r'],[1200,567,572,'g'],[1206,563,572,'g'],[1210,563,567,'g'],[1214,563,567,'g'],[1217,563,570,'r'],[1220,570,580,'r'],[1225,572,579,'g'],[1229,575,580,'r'],[1233,569,580,'g'],[1238,570,574,'g'],[1243,572,575,'r'],[1247,573,585,'r'],[1253,579,585,'g'],[1258,577,585,'g'],[1264,574,578,'g'],[1269,574,578,'r'],[1274,574,578,'g'],[1278,577,583,'r'],[1282,582,590,'r'],[1285,590,597,'r'],[1290,583,595,'g'],[1295,581,584,'g'],[1302,572,582,'g'],[1307,572,579,'g'],[1310,573,585,'r'],[1315,575,585,'g'],[1320,575,577,'g'],
  [1328,560,568,'r'],[1333,565,572,'r'],[1338,558,572,'g'],[1343,559,562,'g'],[1348,559,562,'g'],[1354,561,568,'r'],[1358,567,572,'g'],[1363,566,571,'g'],[1368,565,568,'g'],[1373,562,566,'g'],[1377,560,565,'g'],[1382,558,562,'g'],[1386,558,563,'r'],[1390,561,564,'g'],[1395,562,565,'r'],[1399,561,566,'g'],[1403,565,572,'r'],[1407,572,578,'r'],[1410,577,583,'r'],[1416,583,590,'r']];
  /* notable wicks: x, top, bottom */
  var W=[[48,475,491],[65,525,543],[70,515,530],[225,579,584],[238,671,710],[243,678,692],[256,654,670],[282,700,705],[299,690,699],[308,661,670],[352,700,725],[360,627,641],[363,635,641],[368,655,663],[373,638,644],[381,680,685],[560,467,478],[615,426,436],[645,420,428],[660,436,450],[684,495,501],[680,464,468],[770,496,501],[843,575,585],[848,575,588],[878,591,601],[943,607,613],[961,559,573],[965,565,573],[973,589,603],[1020,578,585],[1034,611,618],[1022,577,585],[1065,644,649],[1073,613,625],[1125,632,639],[1155,575,589],[1173,545,558],[1177,573,577],[1203,572,578],[1293,569,584],[1327,554,561],[1385,557,560]];
  var G=document.getElementById('p3candles');
  W.forEach(function(w){add(G,'rect',{x:w[0],y:w[1],width:1.6,height:w[2]-w[1],fill:'#000'});});
  C.forEach(function(c){
    var a=rnd(),b=rnd();
    if(a<0.4)add(G,'rect',{x:c[0],y:c[1]-2-Math.round(a*6),width:1.4,height:3+Math.round(a*6),fill:'#000'});
    if(b<0.4)add(G,'rect',{x:c[0],y:c[2],width:1.4,height:2+Math.round(b*6),fill:'#000'});
    add(G,'rect',{x:c[0]-3.5,y:c[1]-1.5,width:7,height:c[2]-c[1]+3,fill:'#000'});
  });
  C.forEach(function(c){
    if(c[2]-c[1]>=3)add(G,'rect',{x:c[0]-1.5,y:c[1]+0.5,width:3,height:c[2]-c[1]-1,fill:c[3]=='r'?'#fb3e00':'#3fb94a'});
  });

  /* oscillator */
  var O=[[45,800],[48,799],[57,807],[67,810],[78,808],[83,801],[95,796],[108,792],[117,800],[125,802],[130,806],[135,804],[140,808],[152,805],[156,799],[167,801],[175,797],[180,791],[187,797],[195,795],[200,803],[204,800],[210,809],[218,818],[226,825],[230,814],[235,814],[238,832],[243,831],[252,829],[257,823],[260,825],[265,820],[273,821],[282,824],[290,817],[295,819],[303,810],[310,811],[318,816],[330,809],[340,813],[350,806],[358,800],[365,802],[372,812],[381,818],[388,800],[395,785],[400,781],[415,785],[430,788],[445,785],[460,784],[480,778],[500,782],[515,775],[530,772],[540,770],[550,761],[558,767],[565,763],[578,773],[590,770],[605,773],[620,775],[640,776],[655,778],[662,785],[667,795],[675,810],[685,803],[700,800],[715,808],[730,805],[745,806],[760,800],[775,807],[785,802],[800,810],[820,820],[835,826],[850,828],[856,822],[862,835],[866,820],[872,818],[885,810],[900,797],[915,795],[930,800],[945,804],[955,797],[965,795],[975,803],[990,805],[1002,818],[1010,805],[1015,795],[1025,797],[1040,802],[1055,797],[1070,800],[1085,803],[1100,806],[1115,797],[1130,800],[1145,795],[1160,788],[1172,782],[1185,790],[1200,785],[1215,790],[1230,787],[1245,793],[1260,797],[1275,800],[1285,803],[1300,795],[1315,794],[1330,793],[1345,787],[1360,792],[1380,790],[1397,795],[1407,808],[1417,814]];
  O=jag(O,2.5,345);
  var op=O.map(function(p){return p.join(',');}).join(' ');
  document.getElementById('p4line').setAttribute('points',op);
  document.getElementById('p4fr').setAttribute('points',op+' 1417,852 45,852');
  document.getElementById('p4fg').setAttribute('points',op+' 1417,759 45,759');
})();
</script>
</body>
</html>
